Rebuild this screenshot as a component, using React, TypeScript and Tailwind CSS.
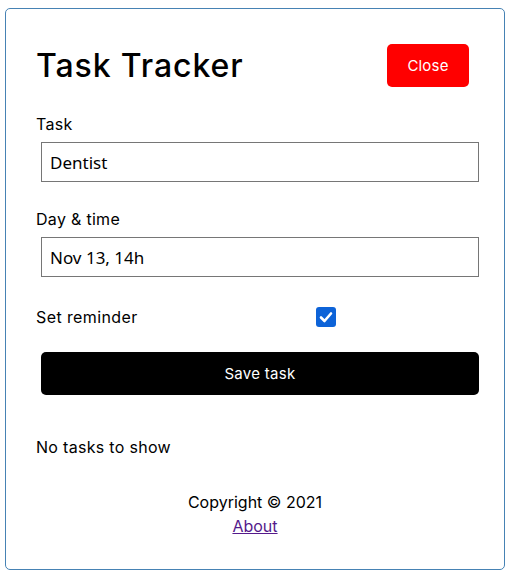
import React from "react";

export default function App() {
  const font = { fontFamily: "Inter, 'Noto Sans', sans-serif" };
  return (
    <div className="w-[512px] min-h-[580px] bg-white pt-[8px]" style={font}>
      <div className="ml-[5px] w-[500px] flex flex-col border border-[#4682b4] rounded-[5px] px-[30px] pt-[30px] pb-[31px] text-black">
        <header className="flex items-center justify-between h-[53px]">
          <h1 className="text-[32px] leading-[48px] font-medium tracking-[0.9px]">Task Tracker</h1>
          <button className="m-[5px] w-[82px] h-[43px] pt-[2px] rounded-[5px] bg-[#ff0000] text-white text-[15px] tracking-[0.2px]">
            Close
          </button>
        </header>
        <form className="flex flex-col mt-[20px]">
          <label className="block text-[16px] leading-[24px] h-[24px] tracking-[0.3px]">Task</label>
          <input
            className="mt-[6px] ml-[5px] w-[438px] h-[40px] px-[8px] py-[3px] text-[17px] border border-[#767676] outline-none"
            style={{ fontFamily: "'Noto Sans', 'Open Sans', sans-serif" }}
            defaultValue="Dentist"
          />
          <label className="mt-[25px] block text-[16px] leading-[24px] h-[24px] tracking-[0.3px]">Day &amp; time</label>
          <input
            className="mt-[6px] ml-[5px] w-[438px] h-[40px] px-[8px] py-[3px] text-[17px] border border-[#767676] outline-none"
            style={{ fontFamily: "'Noto Sans', 'Open Sans', sans-serif" }}
            defaultValue="Nov 13, 14h"
          />
          <div className="mt-[25px] h-[30px] flex items-center">
            <label className="w-[280px] text-[16px] leading-[24px] tracking-[0.4px]">Set reminder</label>
            <span className="relative w-[20px] h-[20px]">
              <input
                type="checkbox"
                defaultChecked
                className="appearance-none block w-[20px] h-[20px] rounded-[3px] bg-[#0d63d8]"
              />
              <svg
                viewBox="0 0 20 20"
                className="absolute inset-0 w-[20px] h-[20px] pointer-events-none"
                fill="none"
                stroke="white"
                strokeWidth="2.6"
                strokeLinecap="round"
                strokeLinejoin="round"
              >
                <path d="M5 10.5 L8.5 14 L15 6.5" />
              </svg>
            </span>
          </div>
          <button
            type="button"
            className="mt-[20px] ml-[5px] w-[438px] h-[43px] pt-[2px] rounded-[5px] bg-black text-white text-[15px] tracking-[0.3px]"
          >
            Save task
          </button>
        </form>
        <p className="mt-[40px] text-[16px] leading-[24px] tracking-[0.3px]">No tasks to show</p>
        <footer className="mt-[31px] text-center text-[16px] leading-[24px]">
          <p>Copyright © 2021</p>
          <a href="#" className="text-[#551a8b] underline">
            About
          </a>
        </footer>
      </div>
    </div>
  );
}
